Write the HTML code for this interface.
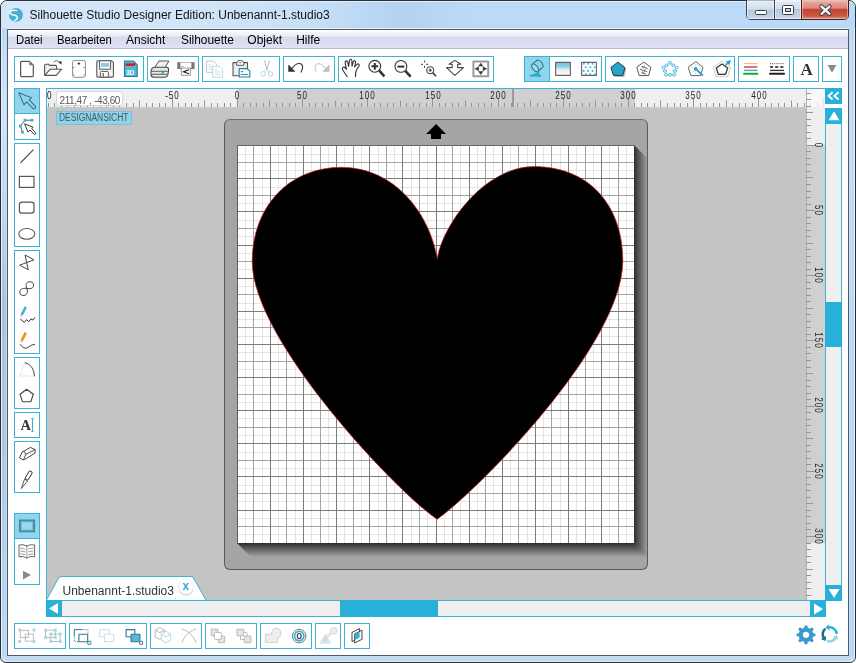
<!DOCTYPE html><html><head><meta charset="utf-8"><style>
*{margin:0;padding:0;box-sizing:border-box}
html,body{width:856px;height:663px;overflow:hidden;background:#fff;font-family:"Liberation Sans",sans-serif}
#r{position:absolute;left:0;top:0;width:856px;height:663px;overflow:hidden;will-change:transform}
.a{position:absolute}
.g{position:absolute;border:1px solid #3eb1d7;background:#fff}
svg{position:absolute;overflow:visible}
</style></head><body><div id="r"><div class="a" style="left:0;top:0;width:856px;height:663px;border:1px solid #26313c;border-radius:7px 7px 6px 6px;background:linear-gradient(#bcdcf8,#bcdaf6 30px,#c0dbf5 60px,#c3dcf4)"></div>
<div class="a" style="left:1px;top:1px;width:854px;height:661px;border:1px solid rgba(255,255,255,0.55);border-radius:6px 6px 5px 5px"></div>
<div class="a" style="left:1px;top:2px;width:854px;height:26px;border-radius:6px 6px 0 0;background:linear-gradient(90deg,#d6e7f9 0px,#d0e4f8 220px,#c4ddf6 330px,#b4d2f0 400px,#bcdaf7 470px,#bbdaf7 856px)"></div>
<div style="position:absolute;left:2px;top:40px;width:4px;height:616px;background:linear-gradient(#c4dcf4 0px,#d2e4f8 70px,#c0d6ec 180px,#aac4de 260px,#acc8e4 400px,#b8d6f4 560px,#bcd8f4 616px)"></div>
<div style="position:absolute;left:850px;top:40px;width:4px;height:616px;background:linear-gradient(#c4dcf4,#bcdaf8 300px,#b8d8f8 616px)"></div>
<div class="a" style="left:7px;top:29px;width:842px;height:627px;border:1px solid #4f5b66;background:#fff"></div>
<div style="position:absolute;left:7px;top:28px;width:842px;height:1px;background:rgba(255,255,255,0.6)"></div>
<div style="position:absolute;left:8px;top:30px;width:840px;height:18px;background:linear-gradient(#ffffff,#f3f4fa 3px,#e9ecf6 6px,#d5daee 7px,#dde2f3)"></div>
<div style="position:absolute;left:8px;top:48px;width:840px;height:1px;background:#b6bccb"></div>
<div class="a" style="left:29.5px;top:8.84px;font-size:12px;line-height:12px;color:#151515;white-space:nowrap;">Silhouette Studio Designer Edition: Unbenannt-1.studio3</div>
<div class="a" style="left:15.5px;top:33.84px;font-size:12px;line-height:12px;color:#000;white-space:nowrap;transform:scaleX(0.95);transform-origin:0 0">Datei</div>
<div class="a" style="left:57px;top:33.84px;font-size:12px;line-height:12px;color:#000;white-space:nowrap;transform:scaleX(0.943);transform-origin:0 0">Bearbeiten</div>
<div class="a" style="left:126px;top:33.84px;font-size:12px;line-height:12px;color:#000;white-space:nowrap;transform:scaleX(1);transform-origin:0 0">Ansicht</div>
<div class="a" style="left:180.6px;top:33.84px;font-size:12px;line-height:12px;color:#000;white-space:nowrap;transform:scaleX(0.99);transform-origin:0 0">Silhouette</div>
<div class="a" style="left:247.3px;top:33.84px;font-size:12px;line-height:12px;color:#000;white-space:nowrap;transform:scaleX(1);transform-origin:0 0">Objekt</div>
<div class="a" style="left:296.2px;top:33.84px;font-size:12px;line-height:12px;color:#000;white-space:nowrap;transform:scaleX(1);transform-origin:0 0">Hilfe</div>
<div class="g" style="left:14px;top:56px;width:130px;height:26px"></div>
<div class="g" style="left:147px;top:56px;width:52px;height:26px"></div>
<div class="g" style="left:202px;top:56px;width:78px;height:26px"></div>
<div class="g" style="left:283px;top:56px;width:52px;height:26px"></div>
<div class="g" style="left:338px;top:56px;width:156px;height:26px"></div>
<div class="g" style="left:524px;top:56px;width:78px;height:26px"></div>
<div class="g" style="left:605px;top:56px;width:130px;height:26px"></div>
<div class="g" style="left:738px;top:56px;width:52px;height:26px"></div>
<div class="g" style="left:793px;top:56px;width:26px;height:26px"></div>
<div class="g" style="left:822px;top:56px;width:20px;height:26px"></div>
<div style="position:absolute;left:525px;top:57px;width:24px;height:24px;background:#91d5ec"></div>
<div style="position:absolute;left:549px;top:57px;width:1px;height:24px;background:#3eb1d7"></div>
<div class="g" style="left:14px;top:88px;width:26px;height:52px"></div>
<div class="g" style="left:14px;top:143px;width:26px;height:104px"></div>
<div class="g" style="left:14px;top:250px;width:26px;height:104px"></div>
<div class="g" style="left:14px;top:357px;width:26px;height:52px"></div>
<div class="g" style="left:14px;top:412px;width:26px;height:26px"></div>
<div class="g" style="left:14px;top:441px;width:26px;height:52px"></div>
<div class="g" style="left:14px;top:513px;width:26px;height:72px"></div>
<div style="position:absolute;left:15px;top:89px;width:24px;height:24px;background:#91d5ec"></div>
<div style="position:absolute;left:15px;top:113px;width:24px;height:1px;background:#3eb1d7"></div>
<div style="position:absolute;left:15px;top:514px;width:24px;height:24px;background:#91d5ec"></div>
<div style="position:absolute;left:15px;top:538px;width:24px;height:1px;background:#3eb1d7"></div>
<div class="g" style="left:14px;top:623px;width:52px;height:26px"></div>
<div class="g" style="left:69px;top:623px;width:78px;height:26px"></div>
<div class="g" style="left:150px;top:623px;width:52px;height:26px"></div>
<div class="g" style="left:205px;top:623px;width:52px;height:26px"></div>
<div class="g" style="left:260px;top:623px;width:52px;height:26px"></div>
<div class="g" style="left:315px;top:623px;width:26px;height:26px"></div>
<div class="g" style="left:344px;top:623px;width:26px;height:26px"></div>
<div style="position:absolute;left:46px;top:88px;width:796px;height:1px;background:#3eb1d7"></div>
<div style="position:absolute;left:46px;top:88px;width:1px;height:529px;background:#3eb1d7"></div>
<div style="position:absolute;left:47px;top:108px;width:759px;height:492px;background:#c4c4c4"></div>
<div style="position:absolute;left:47px;top:89px;width:759px;height:19px;background:#efefef"></div>
<div style="position:absolute;left:237px;top:89px;width:398px;height:19px;background:#d0d0d0"></div>
<div style="position:absolute;left:47px;top:107px;width:759px;height:1px;background:#c8c8c8"></div>
<div style="position:absolute;left:806px;top:89px;width:19px;height:511px;background:#efefef"></div>
<div style="position:absolute;left:806px;top:145px;width:19px;height:398px;background:#d0d0d0"></div>
<div style="position:absolute;left:806px;top:89px;width:1px;height:511px;background:#b0b0b0"></div>
<div style="position:absolute;left:807px;top:89px;width:18px;height:18px;background:#f8f8f8"></div>
<svg class="a" style="left:0;top:0" width="856" height="663" viewBox="0 0 856 663"><line x1="48.5" y1="103" x2="48.5" y2="107" stroke="#969696" stroke-width="1"/><line x1="54.5" y1="103" x2="54.5" y2="107" stroke="#969696" stroke-width="1"/><line x1="61.5" y1="103" x2="61.5" y2="107" stroke="#969696" stroke-width="1"/><line x1="67.5" y1="103" x2="67.5" y2="107" stroke="#969696" stroke-width="1"/><line x1="74.5" y1="100.5" x2="74.5" y2="107" stroke="#969696" stroke-width="1"/><line x1="80.5" y1="103" x2="80.5" y2="107" stroke="#969696" stroke-width="1"/><line x1="87.5" y1="103" x2="87.5" y2="107" stroke="#969696" stroke-width="1"/><line x1="93.5" y1="103" x2="93.5" y2="107" stroke="#969696" stroke-width="1"/><line x1="100.5" y1="103" x2="100.5" y2="107" stroke="#969696" stroke-width="1"/><line x1="106.5" y1="98" x2="106.5" y2="107" stroke="#969696" stroke-width="1"/><line x1="113.5" y1="103" x2="113.5" y2="107" stroke="#969696" stroke-width="1"/><line x1="119.5" y1="103" x2="119.5" y2="107" stroke="#969696" stroke-width="1"/><line x1="126.5" y1="103" x2="126.5" y2="107" stroke="#969696" stroke-width="1"/><line x1="133.5" y1="103" x2="133.5" y2="107" stroke="#969696" stroke-width="1"/><line x1="139.5" y1="100.5" x2="139.5" y2="107" stroke="#969696" stroke-width="1"/><line x1="146.5" y1="103" x2="146.5" y2="107" stroke="#969696" stroke-width="1"/><line x1="152.5" y1="103" x2="152.5" y2="107" stroke="#969696" stroke-width="1"/><line x1="159.5" y1="103" x2="159.5" y2="107" stroke="#969696" stroke-width="1"/><line x1="165.5" y1="103" x2="165.5" y2="107" stroke="#969696" stroke-width="1"/><line x1="172.5" y1="98" x2="172.5" y2="107" stroke="#969696" stroke-width="1"/><line x1="178.5" y1="103" x2="178.5" y2="107" stroke="#969696" stroke-width="1"/><line x1="185.5" y1="103" x2="185.5" y2="107" stroke="#969696" stroke-width="1"/><line x1="191.5" y1="103" x2="191.5" y2="107" stroke="#969696" stroke-width="1"/><line x1="198.5" y1="103" x2="198.5" y2="107" stroke="#969696" stroke-width="1"/><line x1="204.5" y1="100.5" x2="204.5" y2="107" stroke="#969696" stroke-width="1"/><line x1="211.5" y1="103" x2="211.5" y2="107" stroke="#969696" stroke-width="1"/><line x1="217.5" y1="103" x2="217.5" y2="107" stroke="#969696" stroke-width="1"/><line x1="224.5" y1="103" x2="224.5" y2="107" stroke="#969696" stroke-width="1"/><line x1="230.5" y1="103" x2="230.5" y2="107" stroke="#969696" stroke-width="1"/><line x1="237.5" y1="98" x2="237.5" y2="107" stroke="#969696" stroke-width="1"/><line x1="243.5" y1="103" x2="243.5" y2="107" stroke="#969696" stroke-width="1"/><line x1="250.5" y1="103" x2="250.5" y2="107" stroke="#969696" stroke-width="1"/><line x1="256.5" y1="103" x2="256.5" y2="107" stroke="#969696" stroke-width="1"/><line x1="263.5" y1="103" x2="263.5" y2="107" stroke="#969696" stroke-width="1"/><line x1="269.5" y1="100.5" x2="269.5" y2="107" stroke="#969696" stroke-width="1"/><line x1="276.5" y1="103" x2="276.5" y2="107" stroke="#969696" stroke-width="1"/><line x1="282.5" y1="103" x2="282.5" y2="107" stroke="#969696" stroke-width="1"/><line x1="289.5" y1="103" x2="289.5" y2="107" stroke="#969696" stroke-width="1"/><line x1="295.5" y1="103" x2="295.5" y2="107" stroke="#969696" stroke-width="1"/><line x1="302.5" y1="98" x2="302.5" y2="107" stroke="#969696" stroke-width="1"/><line x1="309.5" y1="103" x2="309.5" y2="107" stroke="#969696" stroke-width="1"/><line x1="315.5" y1="103" x2="315.5" y2="107" stroke="#969696" stroke-width="1"/><line x1="322.5" y1="103" x2="322.5" y2="107" stroke="#969696" stroke-width="1"/><line x1="328.5" y1="103" x2="328.5" y2="107" stroke="#969696" stroke-width="1"/><line x1="335.5" y1="100.5" x2="335.5" y2="107" stroke="#969696" stroke-width="1"/><line x1="341.5" y1="103" x2="341.5" y2="107" stroke="#969696" stroke-width="1"/><line x1="348.5" y1="103" x2="348.5" y2="107" stroke="#969696" stroke-width="1"/><line x1="354.5" y1="103" x2="354.5" y2="107" stroke="#969696" stroke-width="1"/><line x1="361.5" y1="103" x2="361.5" y2="107" stroke="#969696" stroke-width="1"/><line x1="367.5" y1="98" x2="367.5" y2="107" stroke="#969696" stroke-width="1"/><line x1="374.5" y1="103" x2="374.5" y2="107" stroke="#969696" stroke-width="1"/><line x1="380.5" y1="103" x2="380.5" y2="107" stroke="#969696" stroke-width="1"/><line x1="387.5" y1="103" x2="387.5" y2="107" stroke="#969696" stroke-width="1"/><line x1="393.5" y1="103" x2="393.5" y2="107" stroke="#969696" stroke-width="1"/><line x1="400.5" y1="100.5" x2="400.5" y2="107" stroke="#969696" stroke-width="1"/><line x1="406.5" y1="103" x2="406.5" y2="107" stroke="#969696" stroke-width="1"/><line x1="413.5" y1="103" x2="413.5" y2="107" stroke="#969696" stroke-width="1"/><line x1="419.5" y1="103" x2="419.5" y2="107" stroke="#969696" stroke-width="1"/><line x1="426.5" y1="103" x2="426.5" y2="107" stroke="#969696" stroke-width="1"/><line x1="432.5" y1="98" x2="432.5" y2="107" stroke="#969696" stroke-width="1"/><line x1="439.5" y1="103" x2="439.5" y2="107" stroke="#969696" stroke-width="1"/><line x1="445.5" y1="103" x2="445.5" y2="107" stroke="#969696" stroke-width="1"/><line x1="452.5" y1="103" x2="452.5" y2="107" stroke="#969696" stroke-width="1"/><line x1="458.5" y1="103" x2="458.5" y2="107" stroke="#969696" stroke-width="1"/><line x1="465.5" y1="100.5" x2="465.5" y2="107" stroke="#969696" stroke-width="1"/><line x1="471.5" y1="103" x2="471.5" y2="107" stroke="#969696" stroke-width="1"/><line x1="478.5" y1="103" x2="478.5" y2="107" stroke="#969696" stroke-width="1"/><line x1="484.5" y1="103" x2="484.5" y2="107" stroke="#969696" stroke-width="1"/><line x1="491.5" y1="103" x2="491.5" y2="107" stroke="#969696" stroke-width="1"/><line x1="498.5" y1="98" x2="498.5" y2="107" stroke="#969696" stroke-width="1"/><line x1="504.5" y1="103" x2="504.5" y2="107" stroke="#969696" stroke-width="1"/><line x1="511.5" y1="103" x2="511.5" y2="107" stroke="#969696" stroke-width="1"/><line x1="517.5" y1="103" x2="517.5" y2="107" stroke="#969696" stroke-width="1"/><line x1="524.5" y1="103" x2="524.5" y2="107" stroke="#969696" stroke-width="1"/><line x1="530.5" y1="100.5" x2="530.5" y2="107" stroke="#969696" stroke-width="1"/><line x1="537.5" y1="103" x2="537.5" y2="107" stroke="#969696" stroke-width="1"/><line x1="543.5" y1="103" x2="543.5" y2="107" stroke="#969696" stroke-width="1"/><line x1="550.5" y1="103" x2="550.5" y2="107" stroke="#969696" stroke-width="1"/><line x1="556.5" y1="103" x2="556.5" y2="107" stroke="#969696" stroke-width="1"/><line x1="563.5" y1="98" x2="563.5" y2="107" stroke="#969696" stroke-width="1"/><line x1="569.5" y1="103" x2="569.5" y2="107" stroke="#969696" stroke-width="1"/><line x1="576.5" y1="103" x2="576.5" y2="107" stroke="#969696" stroke-width="1"/><line x1="582.5" y1="103" x2="582.5" y2="107" stroke="#969696" stroke-width="1"/><line x1="589.5" y1="103" x2="589.5" y2="107" stroke="#969696" stroke-width="1"/><line x1="595.5" y1="100.5" x2="595.5" y2="107" stroke="#969696" stroke-width="1"/><line x1="602.5" y1="103" x2="602.5" y2="107" stroke="#969696" stroke-width="1"/><line x1="608.5" y1="103" x2="608.5" y2="107" stroke="#969696" stroke-width="1"/><line x1="615.5" y1="103" x2="615.5" y2="107" stroke="#969696" stroke-width="1"/><line x1="621.5" y1="103" x2="621.5" y2="107" stroke="#969696" stroke-width="1"/><line x1="628.5" y1="98" x2="628.5" y2="107" stroke="#969696" stroke-width="1"/><line x1="634.5" y1="103" x2="634.5" y2="107" stroke="#969696" stroke-width="1"/><line x1="641.5" y1="103" x2="641.5" y2="107" stroke="#969696" stroke-width="1"/><line x1="647.5" y1="103" x2="647.5" y2="107" stroke="#969696" stroke-width="1"/><line x1="654.5" y1="103" x2="654.5" y2="107" stroke="#969696" stroke-width="1"/><line x1="660.5" y1="100.5" x2="660.5" y2="107" stroke="#969696" stroke-width="1"/><line x1="667.5" y1="103" x2="667.5" y2="107" stroke="#969696" stroke-width="1"/><line x1="674.5" y1="103" x2="674.5" y2="107" stroke="#969696" stroke-width="1"/><line x1="680.5" y1="103" x2="680.5" y2="107" stroke="#969696" stroke-width="1"/><line x1="687.5" y1="103" x2="687.5" y2="107" stroke="#969696" stroke-width="1"/><line x1="693.5" y1="98" x2="693.5" y2="107" stroke="#969696" stroke-width="1"/><line x1="700.5" y1="103" x2="700.5" y2="107" stroke="#969696" stroke-width="1"/><line x1="706.5" y1="103" x2="706.5" y2="107" stroke="#969696" stroke-width="1"/><line x1="713.5" y1="103" x2="713.5" y2="107" stroke="#969696" stroke-width="1"/><line x1="719.5" y1="103" x2="719.5" y2="107" stroke="#969696" stroke-width="1"/><line x1="726.5" y1="100.5" x2="726.5" y2="107" stroke="#969696" stroke-width="1"/><line x1="732.5" y1="103" x2="732.5" y2="107" stroke="#969696" stroke-width="1"/><line x1="739.5" y1="103" x2="739.5" y2="107" stroke="#969696" stroke-width="1"/><line x1="745.5" y1="103" x2="745.5" y2="107" stroke="#969696" stroke-width="1"/><line x1="752.5" y1="103" x2="752.5" y2="107" stroke="#969696" stroke-width="1"/><line x1="758.5" y1="98" x2="758.5" y2="107" stroke="#969696" stroke-width="1"/><line x1="765.5" y1="103" x2="765.5" y2="107" stroke="#969696" stroke-width="1"/><line x1="771.5" y1="103" x2="771.5" y2="107" stroke="#969696" stroke-width="1"/><line x1="778.5" y1="103" x2="778.5" y2="107" stroke="#969696" stroke-width="1"/><line x1="784.5" y1="103" x2="784.5" y2="107" stroke="#969696" stroke-width="1"/><line x1="791.5" y1="100.5" x2="791.5" y2="107" stroke="#969696" stroke-width="1"/><line x1="797.5" y1="103" x2="797.5" y2="107" stroke="#969696" stroke-width="1"/><line x1="804.5" y1="103" x2="804.5" y2="107" stroke="#969696" stroke-width="1"/><line x1="810.5" y1="102.5" x2="810.5" y2="107" stroke="#e2e2e2" stroke-width="1"/><line x1="817.5" y1="102.5" x2="817.5" y2="107" stroke="#e2e2e2" stroke-width="1"/><line x1="823.5" y1="98" x2="823.5" y2="107" stroke="#e2e2e2" stroke-width="1"/><line x1="806" y1="93.5" x2="811" y2="93.5" stroke="#969696" stroke-width="1"/><line x1="806" y1="99.5" x2="811" y2="99.5" stroke="#969696" stroke-width="1"/><line x1="806" y1="106.5" x2="811" y2="106.5" stroke="#969696" stroke-width="1"/><line x1="806" y1="112.5" x2="813" y2="112.5" stroke="#969696" stroke-width="1"/><line x1="806" y1="119.5" x2="811" y2="119.5" stroke="#969696" stroke-width="1"/><line x1="806" y1="125.5" x2="811" y2="125.5" stroke="#969696" stroke-width="1"/><line x1="806" y1="132.5" x2="811" y2="132.5" stroke="#969696" stroke-width="1"/><line x1="806" y1="138.5" x2="811" y2="138.5" stroke="#969696" stroke-width="1"/><line x1="806" y1="145.5" x2="815" y2="145.5" stroke="#969696" stroke-width="1"/><line x1="806" y1="151.5" x2="811" y2="151.5" stroke="#969696" stroke-width="1"/><line x1="806" y1="158.5" x2="811" y2="158.5" stroke="#969696" stroke-width="1"/><line x1="806" y1="164.5" x2="811" y2="164.5" stroke="#969696" stroke-width="1"/><line x1="806" y1="171.5" x2="811" y2="171.5" stroke="#969696" stroke-width="1"/><line x1="806" y1="177.5" x2="813" y2="177.5" stroke="#969696" stroke-width="1"/><line x1="806" y1="184.5" x2="811" y2="184.5" stroke="#969696" stroke-width="1"/><line x1="806" y1="191.5" x2="811" y2="191.5" stroke="#969696" stroke-width="1"/><line x1="806" y1="197.5" x2="811" y2="197.5" stroke="#969696" stroke-width="1"/><line x1="806" y1="204.5" x2="811" y2="204.5" stroke="#969696" stroke-width="1"/><line x1="806" y1="210.5" x2="815" y2="210.5" stroke="#969696" stroke-width="1"/><line x1="806" y1="217.5" x2="811" y2="217.5" stroke="#969696" stroke-width="1"/><line x1="806" y1="223.5" x2="811" y2="223.5" stroke="#969696" stroke-width="1"/><line x1="806" y1="230.5" x2="811" y2="230.5" stroke="#969696" stroke-width="1"/><line x1="806" y1="236.5" x2="811" y2="236.5" stroke="#969696" stroke-width="1"/><line x1="806" y1="243.5" x2="813" y2="243.5" stroke="#969696" stroke-width="1"/><line x1="806" y1="249.5" x2="811" y2="249.5" stroke="#969696" stroke-width="1"/><line x1="806" y1="256.5" x2="811" y2="256.5" stroke="#969696" stroke-width="1"/><line x1="806" y1="262.5" x2="811" y2="262.5" stroke="#969696" stroke-width="1"/><line x1="806" y1="269.5" x2="811" y2="269.5" stroke="#969696" stroke-width="1"/><line x1="806" y1="275.5" x2="815" y2="275.5" stroke="#969696" stroke-width="1"/><line x1="806" y1="282.5" x2="811" y2="282.5" stroke="#969696" stroke-width="1"/><line x1="806" y1="288.5" x2="811" y2="288.5" stroke="#969696" stroke-width="1"/><line x1="806" y1="295.5" x2="811" y2="295.5" stroke="#969696" stroke-width="1"/><line x1="806" y1="301.5" x2="811" y2="301.5" stroke="#969696" stroke-width="1"/><line x1="806" y1="308.5" x2="813" y2="308.5" stroke="#969696" stroke-width="1"/><line x1="806" y1="314.5" x2="811" y2="314.5" stroke="#969696" stroke-width="1"/><line x1="806" y1="321.5" x2="811" y2="321.5" stroke="#969696" stroke-width="1"/><line x1="806" y1="327.5" x2="811" y2="327.5" stroke="#969696" stroke-width="1"/><line x1="806" y1="334.5" x2="811" y2="334.5" stroke="#969696" stroke-width="1"/><line x1="806" y1="340.5" x2="815" y2="340.5" stroke="#969696" stroke-width="1"/><line x1="806" y1="347.5" x2="811" y2="347.5" stroke="#969696" stroke-width="1"/><line x1="806" y1="353.5" x2="811" y2="353.5" stroke="#969696" stroke-width="1"/><line x1="806" y1="360.5" x2="811" y2="360.5" stroke="#969696" stroke-width="1"/><line x1="806" y1="367.5" x2="811" y2="367.5" stroke="#969696" stroke-width="1"/><line x1="806" y1="373.5" x2="813" y2="373.5" stroke="#969696" stroke-width="1"/><line x1="806" y1="380.5" x2="811" y2="380.5" stroke="#969696" stroke-width="1"/><line x1="806" y1="386.5" x2="811" y2="386.5" stroke="#969696" stroke-width="1"/><line x1="806" y1="393.5" x2="811" y2="393.5" stroke="#969696" stroke-width="1"/><line x1="806" y1="399.5" x2="811" y2="399.5" stroke="#969696" stroke-width="1"/><line x1="806" y1="406.5" x2="815" y2="406.5" stroke="#969696" stroke-width="1"/><line x1="806" y1="412.5" x2="811" y2="412.5" stroke="#969696" stroke-width="1"/><line x1="806" y1="419.5" x2="811" y2="419.5" stroke="#969696" stroke-width="1"/><line x1="806" y1="425.5" x2="811" y2="425.5" stroke="#969696" stroke-width="1"/><line x1="806" y1="432.5" x2="811" y2="432.5" stroke="#969696" stroke-width="1"/><line x1="806" y1="438.5" x2="813" y2="438.5" stroke="#969696" stroke-width="1"/><line x1="806" y1="445.5" x2="811" y2="445.5" stroke="#969696" stroke-width="1"/><line x1="806" y1="451.5" x2="811" y2="451.5" stroke="#969696" stroke-width="1"/><line x1="806" y1="458.5" x2="811" y2="458.5" stroke="#969696" stroke-width="1"/><line x1="806" y1="464.5" x2="811" y2="464.5" stroke="#969696" stroke-width="1"/><line x1="806" y1="471.5" x2="815" y2="471.5" stroke="#969696" stroke-width="1"/><line x1="806" y1="477.5" x2="811" y2="477.5" stroke="#969696" stroke-width="1"/><line x1="806" y1="484.5" x2="811" y2="484.5" stroke="#969696" stroke-width="1"/><line x1="806" y1="490.5" x2="811" y2="490.5" stroke="#969696" stroke-width="1"/><line x1="806" y1="497.5" x2="811" y2="497.5" stroke="#969696" stroke-width="1"/><line x1="806" y1="503.5" x2="813" y2="503.5" stroke="#969696" stroke-width="1"/><line x1="806" y1="510.5" x2="811" y2="510.5" stroke="#969696" stroke-width="1"/><line x1="806" y1="516.5" x2="811" y2="516.5" stroke="#969696" stroke-width="1"/><line x1="806" y1="523.5" x2="811" y2="523.5" stroke="#969696" stroke-width="1"/><line x1="806" y1="529.5" x2="811" y2="529.5" stroke="#969696" stroke-width="1"/><line x1="806" y1="536.5" x2="815" y2="536.5" stroke="#969696" stroke-width="1"/><line x1="806" y1="543.5" x2="811" y2="543.5" stroke="#969696" stroke-width="1"/><line x1="806" y1="549.5" x2="811" y2="549.5" stroke="#969696" stroke-width="1"/><line x1="806" y1="556.5" x2="811" y2="556.5" stroke="#969696" stroke-width="1"/><line x1="806" y1="562.5" x2="811" y2="562.5" stroke="#969696" stroke-width="1"/><line x1="806" y1="569.5" x2="813" y2="569.5" stroke="#969696" stroke-width="1"/><line x1="806" y1="575.5" x2="811" y2="575.5" stroke="#969696" stroke-width="1"/><line x1="806" y1="582.5" x2="811" y2="582.5" stroke="#969696" stroke-width="1"/><line x1="806" y1="588.5" x2="811" y2="588.5" stroke="#969696" stroke-width="1"/><line x1="806" y1="595.5" x2="811" y2="595.5" stroke="#969696" stroke-width="1"/><rect x="512" y="89" width="2" height="18" fill="#9a9a9a"/></svg>
<div class="a" style="left:47px;top:89px;width:759px;height:18px;overflow:hidden"><div class="a" style="left:-25.45px;top:2.3px;width:40px;text-align:center;font-size:10px;line-height:10px;color:#222;letter-spacing:1.2px;padding-left:1.2px;transform:scaleX(0.8)">-150</div><div class="a" style="left:104.92px;top:2.3px;width:40px;text-align:center;font-size:10px;line-height:10px;color:#222;letter-spacing:1.2px;padding-left:1.2px;transform:scaleX(0.8)">-50</div><div class="a" style="left:170.10px;top:2.3px;width:40px;text-align:center;font-size:10px;line-height:10px;color:#222;letter-spacing:1.2px;padding-left:1.2px;transform:scaleX(0.8)">0</div><div class="a" style="left:235.28px;top:2.3px;width:40px;text-align:center;font-size:10px;line-height:10px;color:#222;letter-spacing:1.2px;padding-left:1.2px;transform:scaleX(0.8)">50</div><div class="a" style="left:300.47px;top:2.3px;width:40px;text-align:center;font-size:10px;line-height:10px;color:#222;letter-spacing:1.2px;padding-left:1.2px;transform:scaleX(0.8)">100</div><div class="a" style="left:365.65px;top:2.3px;width:40px;text-align:center;font-size:10px;line-height:10px;color:#222;letter-spacing:1.2px;padding-left:1.2px;transform:scaleX(0.8)">150</div><div class="a" style="left:430.83px;top:2.3px;width:40px;text-align:center;font-size:10px;line-height:10px;color:#222;letter-spacing:1.2px;padding-left:1.2px;transform:scaleX(0.8)">200</div><div class="a" style="left:496.02px;top:2.3px;width:40px;text-align:center;font-size:10px;line-height:10px;color:#222;letter-spacing:1.2px;padding-left:1.2px;transform:scaleX(0.8)">250</div><div class="a" style="left:561.20px;top:2.3px;width:40px;text-align:center;font-size:10px;line-height:10px;color:#222;letter-spacing:1.2px;padding-left:1.2px;transform:scaleX(0.8)">300</div><div class="a" style="left:626.38px;top:2.3px;width:40px;text-align:center;font-size:10px;line-height:10px;color:#222;letter-spacing:1.2px;padding-left:1.2px;transform:scaleX(0.8)">350</div><div class="a" style="left:691.57px;top:2.3px;width:40px;text-align:center;font-size:10px;line-height:10px;color:#222;letter-spacing:1.2px;padding-left:1.2px;transform:scaleX(0.8)">400</div></div>
<div class="a" style="left:798px;top:139.60px;width:40px;height:10px;text-align:center;font-size:10px;line-height:10px;color:#222;letter-spacing:1.2px;padding-left:1.2px;transform:rotate(90deg) scaleX(0.8)">0</div>
<div class="a" style="left:798px;top:204.78px;width:40px;height:10px;text-align:center;font-size:10px;line-height:10px;color:#222;letter-spacing:1.2px;padding-left:1.2px;transform:rotate(90deg) scaleX(0.8)">50</div>
<div class="a" style="left:798px;top:269.97px;width:40px;height:10px;text-align:center;font-size:10px;line-height:10px;color:#222;letter-spacing:1.2px;padding-left:1.2px;transform:rotate(90deg) scaleX(0.8)">100</div>
<div class="a" style="left:798px;top:335.15px;width:40px;height:10px;text-align:center;font-size:10px;line-height:10px;color:#222;letter-spacing:1.2px;padding-left:1.2px;transform:rotate(90deg) scaleX(0.8)">150</div>
<div class="a" style="left:798px;top:400.33px;width:40px;height:10px;text-align:center;font-size:10px;line-height:10px;color:#222;letter-spacing:1.2px;padding-left:1.2px;transform:rotate(90deg) scaleX(0.8)">200</div>
<div class="a" style="left:798px;top:465.52px;width:40px;height:10px;text-align:center;font-size:10px;line-height:10px;color:#222;letter-spacing:1.2px;padding-left:1.2px;transform:rotate(90deg) scaleX(0.8)">250</div>
<div class="a" style="left:798px;top:530.70px;width:40px;height:10px;text-align:center;font-size:10px;line-height:10px;color:#222;letter-spacing:1.2px;padding-left:1.2px;transform:rotate(90deg) scaleX(0.8)">300</div>
<div class="a" style="left:56px;top:91px;width:67px;height:15px;border:1px solid #d8d8d8;border-radius:3px;background:#fff"></div>
<div class="a" style="left:59.5px;top:95.5px;font-size:10px;line-height:10px;color:#5a5a5a;white-space:nowrap;letter-spacing:-0.4px">211,47 , -43,60</div>
<div class="a" style="left:56px;top:111px;width:76px;height:14px;border:1px solid #7cc1d8;background:#8fd3ea"></div>
<div class="a" style="left:59px;top:113px;font-size:10px;line-height:10px;color:#44585f;white-space:nowrap;transform:scaleX(0.845);transform-origin:0 0">DESIGNANSICHT</div>
<div class="a" style="left:224px;top:119px;width:424px;height:451px;border:1px solid #5a5a5a;border-top-color:#6e6e6e;border-radius:6px;background:#a5a5a5"></div>
<svg class="a" style="left:0;top:0" width="856" height="663">
<defs>
<linearGradient id="gr" x1="0" x2="1" y1="0" y2="0"><stop offset="0" stop-color="#2e2e2e"/><stop offset="1" stop-color="#9c9c9c"/></linearGradient>
<linearGradient id="gb" x1="0" x2="0" y1="0" y2="1"><stop offset="0" stop-color="#2e2e2e"/><stop offset="1" stop-color="#a5a5a5"/></linearGradient>
</defs>
<polygon points="634,145 647,158 647,557 634,543" fill="url(#gr)"/>
<polygon points="237,543 634,543 647,557 251,557" fill="url(#gb)"/>
</svg>
<svg class="a" style="left:0;top:0" width="856" height="663"><polygon points="436.1,124 446,134 441,134 441,139 431,139 431,134 426.1,134" fill="#000"/></svg>
<svg class="a" style="left:0;top:0" width="856" height="663"><rect x="237" y="145" width="397" height="398" fill="#fff"/><rect x="245" y="145" width="1" height="398" fill="#e4e4e4"/><rect x="237" y="154" width="397" height="1" fill="#e4e4e4"/><rect x="262" y="145" width="1" height="398" fill="#e4e4e4"/><rect x="237" y="170" width="397" height="1" fill="#e4e4e4"/><rect x="278" y="145" width="1" height="398" fill="#e4e4e4"/><rect x="237" y="187" width="397" height="1" fill="#e4e4e4"/><rect x="295" y="145" width="1" height="398" fill="#e4e4e4"/><rect x="237" y="203" width="397" height="1" fill="#e4e4e4"/><rect x="311" y="145" width="1" height="398" fill="#e4e4e4"/><rect x="237" y="220" width="397" height="1" fill="#e4e4e4"/><rect x="328" y="145" width="1" height="398" fill="#e4e4e4"/><rect x="237" y="236" width="397" height="1" fill="#e4e4e4"/><rect x="344" y="145" width="1" height="398" fill="#e4e4e4"/><rect x="237" y="253" width="397" height="1" fill="#e4e4e4"/><rect x="361" y="145" width="1" height="398" fill="#e4e4e4"/><rect x="237" y="269" width="397" height="1" fill="#e4e4e4"/><rect x="378" y="145" width="1" height="398" fill="#e4e4e4"/><rect x="237" y="286" width="397" height="1" fill="#e4e4e4"/><rect x="394" y="145" width="1" height="398" fill="#e4e4e4"/><rect x="237" y="303" width="397" height="1" fill="#e4e4e4"/><rect x="411" y="145" width="1" height="398" fill="#e4e4e4"/><rect x="237" y="319" width="397" height="1" fill="#e4e4e4"/><rect x="427" y="145" width="1" height="398" fill="#e4e4e4"/><rect x="237" y="336" width="397" height="1" fill="#e4e4e4"/><rect x="444" y="145" width="1" height="398" fill="#e4e4e4"/><rect x="237" y="352" width="397" height="1" fill="#e4e4e4"/><rect x="460" y="145" width="1" height="398" fill="#e4e4e4"/><rect x="237" y="369" width="397" height="1" fill="#e4e4e4"/><rect x="477" y="145" width="1" height="398" fill="#e4e4e4"/><rect x="237" y="385" width="397" height="1" fill="#e4e4e4"/><rect x="493" y="145" width="1" height="398" fill="#e4e4e4"/><rect x="237" y="402" width="397" height="1" fill="#e4e4e4"/><rect x="510" y="145" width="1" height="398" fill="#e4e4e4"/><rect x="237" y="418" width="397" height="1" fill="#e4e4e4"/><rect x="527" y="145" width="1" height="398" fill="#e4e4e4"/><rect x="237" y="435" width="397" height="1" fill="#e4e4e4"/><rect x="543" y="145" width="1" height="398" fill="#e4e4e4"/><rect x="237" y="452" width="397" height="1" fill="#e4e4e4"/><rect x="560" y="145" width="1" height="398" fill="#e4e4e4"/><rect x="237" y="468" width="397" height="1" fill="#e4e4e4"/><rect x="576" y="145" width="1" height="398" fill="#e4e4e4"/><rect x="237" y="485" width="397" height="1" fill="#e4e4e4"/><rect x="593" y="145" width="1" height="398" fill="#e4e4e4"/><rect x="237" y="501" width="397" height="1" fill="#e4e4e4"/><rect x="609" y="145" width="1" height="398" fill="#e4e4e4"/><rect x="237" y="518" width="397" height="1" fill="#e4e4e4"/><rect x="626" y="145" width="1" height="398" fill="#e4e4e4"/><rect x="237" y="534" width="397" height="1" fill="#e4e4e4"/><rect x="253" y="145" width="1" height="398" fill="#a4a4a4"/><rect x="237" y="162" width="397" height="1" fill="#a4a4a4"/><rect x="286" y="145" width="1" height="398" fill="#a4a4a4"/><rect x="237" y="195" width="397" height="1" fill="#a4a4a4"/><rect x="320" y="145" width="1" height="398" fill="#a4a4a4"/><rect x="237" y="228" width="397" height="1" fill="#a4a4a4"/><rect x="353" y="145" width="1" height="398" fill="#a4a4a4"/><rect x="237" y="261" width="397" height="1" fill="#a4a4a4"/><rect x="386" y="145" width="1" height="398" fill="#a4a4a4"/><rect x="237" y="294" width="397" height="1" fill="#a4a4a4"/><rect x="419" y="145" width="1" height="398" fill="#a4a4a4"/><rect x="237" y="327" width="397" height="1" fill="#a4a4a4"/><rect x="452" y="145" width="1" height="398" fill="#a4a4a4"/><rect x="237" y="361" width="397" height="1" fill="#a4a4a4"/><rect x="485" y="145" width="1" height="398" fill="#a4a4a4"/><rect x="237" y="394" width="397" height="1" fill="#a4a4a4"/><rect x="518" y="145" width="1" height="398" fill="#a4a4a4"/><rect x="237" y="427" width="397" height="1" fill="#a4a4a4"/><rect x="551" y="145" width="1" height="398" fill="#a4a4a4"/><rect x="237" y="460" width="397" height="1" fill="#a4a4a4"/><rect x="585" y="145" width="1" height="398" fill="#a4a4a4"/><rect x="237" y="493" width="397" height="1" fill="#a4a4a4"/><rect x="618" y="145" width="1" height="398" fill="#a4a4a4"/><rect x="237" y="526" width="397" height="1" fill="#a4a4a4"/><rect x="237" y="145" width="1" height="398" fill="#7c7c7c"/><rect x="237" y="145" width="397" height="1" fill="#7c7c7c"/><rect x="270" y="145" width="1" height="398" fill="#7c7c7c"/><rect x="237" y="178" width="397" height="1" fill="#7c7c7c"/><rect x="303" y="145" width="1" height="398" fill="#7c7c7c"/><rect x="237" y="211" width="397" height="1" fill="#7c7c7c"/><rect x="336" y="145" width="1" height="398" fill="#7c7c7c"/><rect x="237" y="245" width="397" height="1" fill="#7c7c7c"/><rect x="369" y="145" width="1" height="398" fill="#7c7c7c"/><rect x="237" y="278" width="397" height="1" fill="#7c7c7c"/><rect x="402" y="145" width="1" height="398" fill="#7c7c7c"/><rect x="237" y="311" width="397" height="1" fill="#7c7c7c"/><rect x="436" y="145" width="1" height="398" fill="#7c7c7c"/><rect x="237" y="344" width="397" height="1" fill="#7c7c7c"/><rect x="469" y="145" width="1" height="398" fill="#7c7c7c"/><rect x="237" y="377" width="397" height="1" fill="#7c7c7c"/><rect x="502" y="145" width="1" height="398" fill="#7c7c7c"/><rect x="237" y="410" width="397" height="1" fill="#7c7c7c"/><rect x="535" y="145" width="1" height="398" fill="#7c7c7c"/><rect x="237" y="443" width="397" height="1" fill="#7c7c7c"/><rect x="568" y="145" width="1" height="398" fill="#7c7c7c"/><rect x="237" y="476" width="397" height="1" fill="#7c7c7c"/><rect x="601" y="145" width="1" height="398" fill="#7c7c7c"/><rect x="237" y="510" width="397" height="1" fill="#7c7c7c"/><rect x="237" y="145" width="1" height="398" fill="#5e5e5e"/><rect x="237" y="145" width="397" height="1" fill="#666"/></svg>
<svg class="a" style="left:0;top:0" width="856" height="663"><path d="M437.30,258.50 C429.63,214.03 395.29,167.32 341.12,167.32 C288.76,167.32 252.19,207.01 252.19,261.45 C252.19,342.38 403.59,498.16 437.20,519.20 C474.74,492.72 622.84,346.04 622.84,260.53 C622.84,206.56 590.22,166.60 534.09,166.60 C484.79,166.60 443.16,223.85 437.20,258.50 Z" fill="#000" stroke="#d42020" stroke-width="0.7"/></svg>
<div style="position:absolute;left:825px;top:88px;width:17px;height:16px;background:#27b1d9"></div>
<svg class="a" style="left:825px;top:88px" width="17" height="16"><path d="M7.6,4.3 L3.6,7.9 L7.6,11.5 M13.6,4.3 L9.4,7.9 L13.6,11.5" stroke="#fff" stroke-width="1.9" fill="none"/></svg>
<div style="position:absolute;left:825px;top:108px;width:17px;height:492px;background:#efefef;border-left:1px solid #3eb1d7;border-right:1px solid #3eb1d7"></div>
<div style="position:absolute;left:825px;top:108px;width:17px;height:16px;background:#27b1d9"></div>
<svg class="a" style="left:825px;top:108px" width="17" height="16"><polygon points="9,3.2 14.4,12.2 3.6,12.2" fill="#fff"/></svg>
<div style="position:absolute;left:825px;top:302px;width:17px;height:45px;background:#27b1d9"></div>
<div style="position:absolute;left:825px;top:585px;width:17px;height:16px;background:#27b1d9"></div>
<svg class="a" style="left:825px;top:585px" width="17" height="16"><polygon points="3.6,4 14.6,4 9.1,13" fill="#fff"/></svg>
<div style="position:absolute;left:46px;top:600px;width:780px;height:17px;background:#efefef;border-top:1px solid #3eb1d7;border-bottom:1px solid #3eb1d7"></div>
<div style="position:absolute;left:46px;top:600px;width:16px;height:17px;background:#27b1d9"></div>
<svg class="a" style="left:46px;top:600px" width="16" height="17"><polygon points="3,8.5 12,3 12,14" fill="#fff"/></svg>
<div style="position:absolute;left:340px;top:600px;width:98px;height:17px;background:#27b1d9"></div>
<div style="position:absolute;left:810px;top:600px;width:16px;height:17px;background:#27b1d9"></div>
<svg class="a" style="left:810px;top:600px" width="16" height="17"><polygon points="4,3.6 13,9 4,14.6" fill="#fff"/></svg>
<svg class="a" style="left:0;top:0" width="856" height="663"><path d="M46.5,600 L58,579 Q59.5,576.5 62,576.5 L191,576.5 Q193,576.5 194,579 L206,600" fill="#fff" stroke="#3eb1d7" stroke-width="1"/></svg>
<div class="a" style="left:62.5px;top:585px;font-size:12px;line-height:12px;color:#333;white-space:nowrap">Unbenannt-1.studio3</div>
<div class="a" style="left:179px;top:580px;width:14px;height:14px;border-radius:7px;background:#fff;box-shadow:0 1px 2px rgba(0,0,0,0.25)"></div>
<div class="a" style="left:182.4px;top:580px;width:8px;font-size:12px;line-height:12px;font-weight:bold;color:#27aad8">x</div>
<svg class="a" style="left:0;top:0" width="856" height="663">
<circle cx="15.9" cy="14.9" r="7" fill="#48aed2"/>
<path d="M17.2,10.6 C13.5,9.6 10.2,10.6 9.9,12.6 C9.7,14.4 12.5,14.8 14.5,15.3 C17,15.9 17.8,16.8 17.3,18.3 C16.9,19.6 15.6,20.4 14.2,20.7" stroke="#fff" stroke-width="1.5" fill="none"/>
<defs>
<linearGradient id="cb" x1="0" x2="0" y1="0" y2="1"><stop offset="0" stop-color="#e6eef8"/><stop offset="0.48" stop-color="#d2deec"/><stop offset="0.5" stop-color="#b5c7dc"/><stop offset="1" stop-color="#c9d8ea"/></linearGradient>
<linearGradient id="cr" x1="0" x2="0" y1="0" y2="1"><stop offset="0" stop-color="#eab0a6"/><stop offset="0.45" stop-color="#d98a7c"/><stop offset="0.5" stop-color="#c8432c"/><stop offset="0.8" stop-color="#c65640"/><stop offset="1" stop-color="#dc9482"/></linearGradient>
</defs>
<path d="M746.5,0 L746.5,15.5 Q746.5,19.5 750.5,19.5 L774.5,19.5 L774.5,0 Z" fill="url(#cb)" stroke="#3a4250" stroke-width="1"/>
<rect x="774.5" y="-1" width="27" height="20.5" fill="url(#cb)" stroke="#3a4250" stroke-width="1"/>
<path d="M801.5,-1 L801.5,19.5 L844.5,19.5 Q848.5,19.5 848.5,15.5 L848.5,-1 Z" fill="url(#cr)" stroke="#4a1a14" stroke-width="1"/>
<rect x="747.5" y="1" width="26" height="17.5" fill="none" stroke="rgba(255,255,255,0.55)" stroke-width="1"/>
<rect x="775.5" y="1" width="25" height="17.5" fill="none" stroke="rgba(255,255,255,0.55)" stroke-width="1"/>
<rect x="802.5" y="1" width="45" height="17.5" fill="none" stroke="rgba(255,255,255,0.4)" stroke-width="1"/>
<rect x="755.5" y="10.5" width="11" height="4" rx="1" fill="#fff" stroke="#333b48" stroke-width="1"/>
<rect x="782.5" y="5.5" width="11" height="9" rx="1" fill="#fff" stroke="#333b48" stroke-width="1"/>
<rect x="785.5" y="8.5" width="5" height="3" fill="#c4d4e6" stroke="#333b48" stroke-width="1"/>
<path d="M821.5,6.5 L829.5,13.8 M829.5,6.5 L821.5,13.8" stroke="#2d3540" stroke-width="4.2" stroke-linecap="round"/>
<path d="M821.5,6.5 L829.5,13.8 M829.5,6.5 L821.5,13.8" stroke="#f4f4f4" stroke-width="2.4" stroke-linecap="round"/>
</svg>
<svg class="a" style="left:0;top:0" width="856" height="663" fill="none" stroke-linejoin="round">
<!-- new doc -->
<path d="M20.6,62.3 Q20.6,61.3 21.6,61.3 L29.4,61.3 L33.3,65.2 L33.3,75.6 Q33.3,76.6 32.3,76.6 L21.6,76.6 Q20.6,76.6 20.6,75.6 Z" stroke="#555" stroke-width="1.2" fill="#fff"/>
<circle cx="30.6" cy="64" r="1.1" stroke="#555" stroke-width="1"/>
<!-- open folder -->
<path d="M44.6,75.2 L44.6,65.3 Q44.6,64.2 45.7,64.2 L48.4,64.2 L49.6,65.4 L55.6,65.4 Q56.6,65.4 56.6,66.4 L56.6,69.2" stroke="#555" stroke-width="1.1" fill="#efefef"/>
<path d="M44.8,75.4 L50.3,69.2 L61.6,69.2 L56.2,75.4 Z" stroke="#555" stroke-width="1.1" fill="#fff"/>
<path d="M53.5,62.3 Q56.5,58.8 59.8,62.6" stroke="#555" stroke-width="0.9"/>
<path d="M58.3,62.6 L61.6,64.4 L61.4,60.8 Z" fill="#333" stroke="none"/>
<!-- mat -->
<rect x="72.6" y="60.4" width="12.8" height="16.9" rx="2" stroke="#8a8a8a" stroke-width="1"/>
<path d="M78.9,62.2 L80.3,63.6 L78.9,65 L77.5,63.6 Z" fill="#333" stroke="none"/>
<path d="M73,67.5 L74.6,67.5 M83.4,67.5 L85,67.5 M73,75 L74.6,75 M83.4,75 L85,75" stroke="#999" stroke-width="1"/>
<!-- floppy -->
<path d="M96.8,61.7 Q96.8,60.7 97.8,60.7 L111.5,60.7 L113.4,62.6 L113.4,76.2 Q113.4,77.1 112.4,77.1 L97.8,77.1 Q96.8,77.1 96.8,76.1 Z" stroke="#555" stroke-width="1.1" fill="#f4f4f4"/>
<rect x="99.6" y="60.8" width="11" height="8.4" stroke="#555" stroke-width="1" fill="#fff"/>
<rect x="101" y="63" width="8.2" height="3.8" fill="#8fcbe0" stroke="none"/>
<rect x="100.4" y="71.4" width="8" height="5.7" rx="1" stroke="#555" stroke-width="1" fill="#fff"/>
<path d="M103.2,73 L103.2,76.6" stroke="#555" stroke-width="1.2"/>
<!-- sd card -->
<path d="M124.5,61 L133.4,61 L137.2,64.8 L137.2,76.5 L124.5,76.5 Z" fill="#58b6d4" stroke="#1f7e9c" stroke-width="1.1"/>
<rect x="125.6" y="63.4" width="9.6" height="2.4" fill="#e01010" stroke="none"/>
<text x="126.2" y="75" font-family="Liberation Sans" font-weight="bold" font-size="6.5" fill="#fff" stroke="none">3D</text>
<!-- printer -->
<path d="M155,67 L158.8,61 L169,61 L165.4,67" stroke="#555" stroke-width="1" fill="#f0f0f0"/>
<path d="M151,72 Q151,67.3 155.5,67.3 L166.5,67.3 Q169,67.5 168.6,70 L167.8,75 Q167.3,77.2 165,77.2 L154,77.2 Q151,77.2 151,74.5 Z" stroke="#444" stroke-width="1.1" fill="#e6e6e6"/>
<path d="M151.5,71.3 L167.7,71.3 M151.8,74.3 L167.2,74.3" stroke="#555" stroke-width="0.9"/>
<rect x="161.6" y="72" width="2.4" height="1.9" fill="#3ab0e0" stroke="none"/>
<!-- cutter -->
<rect x="177.3" y="62.2" width="17.3" height="6.8" fill="#777" stroke="none"/>
<rect x="180.4" y="62.6" width="11" height="5.4" fill="#fff" stroke="none"/>
<path d="M180.5,66.6 L184,66.6" stroke="#7cc6e4" stroke-width="0.8"/>
<rect x="181.3" y="68" width="9" height="7.3" fill="#fff" stroke="#888" stroke-width="0.9"/>
<path d="M189,69.8 L183.2,71.8 L189,73.8 M185.4,71.1 L185.4,72.5" stroke="#222" stroke-width="1.2"/>
<!-- copy -->
<path d="M206.6,61 L213.5,61 L216.6,64.2 L216.6,72.3 L206.6,72.3 Z" stroke="#c8c8c8" stroke-width="1" fill="#fff"/>
<path d="M208.5,64.5 L211,64.5 M208.5,66.8 L214.5,66.8 M208.5,69.2 L214.5,69.2" stroke="#d0d0d0" stroke-width="0.8"/>
<path d="M212.4,66.2 L219.7,66.2 L222.6,69.2 L222.6,77.2 L212.4,77.2 Z" stroke="#b9dfe9" stroke-width="1" fill="#fff"/>
<path d="M214.4,69.5 L216.8,69.5 M214.4,72 L220.8,72 M214.4,74.5 L220.8,74.5" stroke="#c8d8de" stroke-width="0.8"/>
<!-- paste -->
<path d="M233,62.6 L247.5,62.6 L247.5,75.8 L233,75.8 Z" stroke="#555" stroke-width="1.1" fill="#eeeeee" stroke-linejoin="round"/>
<path d="M236.6,65.3 L236.6,63.5 Q236.6,60.3 240.2,60.3 Q243.8,60.3 243.8,63.5 L243.8,65.3 Z" stroke="#555" stroke-width="1" fill="#fff"/>
<rect x="239.3" y="62" width="1.8" height="1.2" fill="#777" stroke="none"/>
<path d="M239.2,68.6 L247.2,68.6 L249.8,71.2 L249.8,77 L239.2,77 Z" stroke="#20809c" stroke-width="1.1" fill="#fff"/>
<path d="M240.8,71.6 L243.2,71.6 M240.8,74.5 L248.2,74.5" stroke="#2a90b0" stroke-width="1.1"/>
<!-- scissors -->
<path d="M264.4,60.3 L266.8,69.6 L269.5,60.3" stroke="#b0b0b0" stroke-width="0.9"/>
<path d="M266.8,69.6 L264.2,72.2 M266.8,69.6 L269.4,72.2" stroke="#a8d4e2" stroke-width="0.9"/>
<circle cx="263.2" cy="73.9" r="2.3" stroke="#a8d4e2" stroke-width="0.9"/>
<circle cx="270.4" cy="73.9" r="2.3" stroke="#a8d4e2" stroke-width="0.9"/>
<!-- undo -->
<path d="M291.5,69 Q297,61.5 301.5,64.2 Q304,67 300.8,72.6" stroke="#333" stroke-width="1.1"/>
<path d="M288.6,65 L288.6,71.4 L294.8,71.4 Z" fill="#333" stroke="#333" stroke-width="0.6"/>
<!-- redo -->
<path d="M325.8,69 Q320.5,61.5 316.2,64.4 Q313.6,67 316.6,72.4" stroke="#c0c0c0" stroke-width="1"/>
<path d="M329.1,65 L329.1,71.4 L322.9,71.4 Z" fill="#bdbdbd" stroke="#bdbdbd" stroke-width="0.6"/>
<!-- hand -->
<path d="M347.4,77 L342.6,69.8 Q341.8,68 343.2,67.3 Q344.5,66.8 345.6,68.3 L346.4,69.3 L345.2,62.6 Q345,61 346.3,60.9 Q347.5,60.9 347.8,62.4 L348.6,66.4 L349.4,60.8 Q349.6,59.3 350.7,59.3 Q351.9,59.3 351.9,60.8 L352,66.3 L353.3,61.8 Q353.7,60.5 354.8,60.7 Q355.9,61 355.6,62.4 L354.6,67 L357,64.4 Q358,63.4 358.9,64.1 Q359.7,64.8 359,66 L356.3,70.3 Q355.3,72.5 355.5,77" stroke="#333" stroke-width="1.1" fill="#fff"/>
<!-- zoom in -->
<circle cx="374.8" cy="66.3" r="5.9" stroke="#333" stroke-width="1.1" fill="#fff"/>
<path d="M371.4,66.3 L378.2,66.3 M374.8,62.9 L374.8,69.7" stroke="#333" stroke-width="2"/>
<path d="M379.2,70.7 L384.4,76.4" stroke="#333" stroke-width="2.6"/>
<!-- zoom out -->
<circle cx="400.9" cy="66.4" r="5.9" stroke="#333" stroke-width="1.1" fill="#fff"/>
<path d="M397.4,66.6 L404.4,66.6" stroke="#333" stroke-width="2"/>
<path d="M405.3,70.8 L410.6,76.6" stroke="#333" stroke-width="2.6"/>
<!-- zoom selection -->
<path d="M421,64.3 L423,64.3 M426.2,64.3 L428.2,64.3 M424.6,60.5 L424.6,62.4 M424.6,65.9 L424.6,67.9" stroke="#333" stroke-width="1"/>
<circle cx="430.2" cy="70.2" r="3.6" stroke="#333" stroke-width="1"/>
<path d="M428.6,70.2 L431.8,70.2 M430.2,68.6 L430.2,71.8" stroke="#333" stroke-width="1.1"/>
<path d="M432.8,72.8 L436,76.3" stroke="#333" stroke-width="1.5"/>
<!-- fit -->
<path d="M446.4,67.6 L452.2,67.6 L452.2,64.3 L449,64.3 L454.9,60.4 L460.8,64.3 L457.6,64.3 L457.6,67.6 L463.5,67.6 L454.9,75.4 Z" stroke="#444" stroke-width="1.05" fill="#fff"/>
<!-- fit page -->
<rect x="473.4" y="61.4" width="14.8" height="14.8" stroke="#9a9a9a" stroke-width="2" fill="#fff"/>
<path d="M480.8,63.2 L482.9,66 L478.7,66 Z M480.8,74.5 L482.9,71.6 L478.7,71.6 Z M475.1,68.8 L478.6,66.8 L478.6,70.8 Z M486.6,68.8 L483.1,66.8 L483.1,70.8 Z" fill="#3a3a3a" stroke="#3a3a3a" stroke-width="0.6"/>
</svg>
<svg class="a" style="left:0;top:0" width="856" height="663" fill="none" stroke-linejoin="round">
<defs>
<linearGradient id="gf" x1="0" x2="0" y1="0" y2="1"><stop offset="0" stop-color="#5cc6e6"/><stop offset="0.35" stop-color="#8fd0e4"/><stop offset="0.5" stop-color="#e6e6e6"/><stop offset="1" stop-color="#ffffff"/></linearGradient>
</defs>
<!-- fill bucket -->
<g transform="rotate(50 537.7 65.6)">
<path d="M533.2,62.2 Q537.7,58.6 542.2,62.2 L542.2,69 L533.2,69 Z" stroke="#2e7a93" stroke-width="1.1" fill="#8fd3ea"/>
<ellipse cx="537.7" cy="69" rx="4.5" ry="2.4" stroke="#2e7a93" stroke-width="1.1" fill="#a6dcee"/>
</g>
<path d="M539.2,71 Q538.4,73.6 541.6,75.8 Q542,77.2 537.5,76.8 L530.8,76.5 Q528.6,76.2 530.2,75.1 Q534,74.3 537,72.6 Z" fill="#2fa9d3" stroke="none"/>
<!-- gradient fill -->
<rect x="555.6" y="62.4" width="14.8" height="13" stroke="#666" stroke-width="1.1" fill="url(#gf)"/>
<!-- pattern fill -->
<rect x="581.6" y="62.4" width="14.8" height="13" stroke="#666" stroke-width="1.1" fill="#fff"/>
<g fill="#45b8e0" stroke="none">
<circle cx="583.8" cy="63.8" r="1"/><circle cx="588.2" cy="63.8" r="1"/><circle cx="592.6" cy="63.8" r="1"/>
<circle cx="585.8" cy="67.2" r="1.05"/><circle cx="590.3" cy="67.2" r="1.05"/><circle cx="594.8" cy="67.2" r="1.05"/>
<circle cx="583.6" cy="70.9" r="1.05"/><circle cx="588.1" cy="70.9" r="1.05"/><circle cx="592.6" cy="70.9" r="1.05"/>
<circle cx="585.8" cy="74.3" r="1"/><circle cx="590.3" cy="74.3" r="1"/><circle cx="594.8" cy="74.3" r="1"/>
</g>
<!-- filled pentagon -->
<polygon points="619.4,63.6 626.4,69 624.3,76.9 614.9,76.9 612.4,69" fill="#9a9a9a" stroke="none" opacity="0.7"/>
<polygon points="617.9,62.1 624.9,67.5 622.8,75.4 613.4,75.4 610.9,67.5" fill="#2aa3cc" stroke="#2b3a40" stroke-width="1"/>
<!-- hatched pentagon -->
<polygon points="643.7,62.1 650.8,67.2 648.7,75.6 639.2,75.6 636.8,67.2" fill="#fff" stroke="#555" stroke-width="1"/>
<path d="M641.5,66.4 L647.6,68.5 M640,69.2 L647.2,71.6 M641.2,72.6 L646.2,74.3" stroke="#6a6a6a" stroke-width="1"/>
<path d="M645.2,65.4 L641.8,68.2 M646.2,68.6 L642.2,71.6 M645,71.2 L642.4,73.4" stroke="#7a7a7a" stroke-width="0.9"/>
<!-- dotted pentagon -->
<g stroke="#45b4dc" stroke-width="1" fill="#fff"><ellipse cx="670" cy="62.8" rx="1.7" ry="1.2"/><ellipse cx="666.7" cy="65.3" rx="1.7" ry="1.2"/><ellipse cx="673.2" cy="65.2" rx="1.7" ry="1.2"/><ellipse cx="663.6" cy="67.5" rx="1.7" ry="1.2"/><ellipse cx="676.5" cy="67.5" rx="1.7" ry="1.2"/><ellipse cx="664.9" cy="71.1" rx="1.7" ry="1.2"/><ellipse cx="675" cy="71.1" rx="1.7" ry="1.2"/><ellipse cx="666.2" cy="74.8" rx="1.7" ry="1.2"/><ellipse cx="670" cy="74.8" rx="1.7" ry="1.2"/><ellipse cx="674.1" cy="74.8" rx="1.7" ry="1.2"/></g>
<!-- trace pentagon -->
<polygon points="695.7,61.6 703,67.4 700.4,75.6 690.9,75.6 688.2,67.4" fill="#fff" stroke="#666" stroke-width="1"/>
<path d="M695.7,63.5 L695.7,66 M690.5,67.5 L693,68 M698.8,68 L701,67.4 M692.5,72.5 L693.8,71 M695.7,71.5 L695.7,74" stroke="#ccc" stroke-width="0.8"/>
<path d="M697,70 L702.8,75.6" stroke="#2a9cd2" stroke-width="1.8"/>
<circle cx="695.7" cy="68.9" r="1.9" fill="#2a9cd2" stroke="none"/>
<!-- offset pentagon -->
<polygon points="721.9,61.2 730.6,67.4 727.6,76.7 716.2,76.7 713.4,67.4" fill="#fff" stroke="#c4c4c4" stroke-width="0.9"/>
<polygon points="721.9,63.9 727.7,68 725.6,74.3 718.3,74.3 716.3,68" fill="#fff" stroke="#333" stroke-width="1.2"/>
<path d="M725.3,65.5 L728.8,62" stroke="#2a9cd2" stroke-width="1.2"/>
<polygon points="731,60 725.8,61.6 729.4,65.2" fill="#2a9cd2" stroke="none"/>
<!-- line colors -->
<path d="M744,63.6 L757.4,63.6" stroke="#f8b878" stroke-width="1"/>
<path d="M744,67 L757.4,67" stroke="#f55c5c" stroke-width="1.8"/>
<path d="M744,70.4 L757.4,70.4" stroke="#3aa8d8" stroke-width="1.4"/>
<path d="M744,73.7 L757.4,73.7" stroke="#10b020" stroke-width="2" stroke-linecap="round"/>
<!-- line style -->
<path d="M770,63.6 L784,63.6" stroke="#555" stroke-width="1" stroke-dasharray="1 1.1"/>
<path d="M770,67 L784,67" stroke="#555" stroke-width="1.8" stroke-dasharray="3.2 1.9"/>
<path d="M770,70.4 L784,70.4" stroke="#333" stroke-width="1.3"/>
<path d="M770,73.7 L784,73.7" stroke="#222" stroke-width="2" stroke-linecap="round"/>
<!-- A -->
<text x="800.4" y="75" font-family="Liberation Serif" font-weight="bold" font-size="17" fill="#333" stroke="none">A</text>
<!-- dropdown -->
<polygon points="827.6,65 836.4,65 832,72.8" fill="#8a8a8a" stroke="none"/>
</svg>
<svg class="a" style="left:0;top:0" width="856" height="663" fill="none" stroke-linejoin="round" stroke-linecap="round">
<!-- select -->
<path d="M18.9,92.7 L31.4,97.8 L29.2,99.8 L35.4,106.4 Q36,107.6 34.9,108.6 Q33.8,109.5 32.9,108.4 L26.5,101.8 L23.9,104.8 Z" stroke="#2e7a93" stroke-width="1.1" fill="#91d5ec"/>
<!-- node edit -->
<path d="M25,120.2 L32,120.2 M25,120.2 L20.4,126 L22.5,132.2" stroke="#555" stroke-width="0.9"/>
<path d="M18.9,92.7 L31.4,97.8 L29.2,99.8 L35.4,106.4 Q36,107.6 34.9,108.6 Q33.8,109.5 32.9,108.4 L26.5,101.8 L23.9,104.8 Z" stroke="#333" stroke-width="1.5" fill="#fff" transform="translate(25 124) scale(0.65) translate(-18.9 -92.7)"/>
<g fill="#3cb0d8" stroke="none">
<rect x="23.6" y="118.8" width="2.8" height="2.8"/><rect x="30.6" y="118.8" width="2.8" height="2.8"/>
<rect x="19" y="124.6" width="2.8" height="2.8"/><rect x="21.1" y="130.8" width="2.8" height="2.8"/>
</g>
<!-- line -->
<path d="M20.8,162.6 L33.2,149.8" stroke="#444" stroke-width="1.1"/>
<!-- rect -->
<rect x="19.4" y="176.4" width="14.6" height="11" stroke="#555" stroke-width="1.2" stroke-linejoin="miter"/>
<!-- rounded rect -->
<rect x="19.4" y="202.2" width="14.6" height="11" rx="2.6" stroke="#555" stroke-width="1.2"/>
<!-- ellipse -->
<ellipse cx="26.8" cy="233.9" rx="8" ry="5.4" stroke="#555" stroke-width="1.1"/>
<!-- polygon bowtie -->
<path d="M25.4,255.2 L34,259.8 L19.6,265.2 L27.9,269.6 Z" stroke="#444" stroke-width="1"/>
<!-- curve (figure 8) -->
<path transform="translate(0.5 0.5)" d="M26.5,288 C24,283 26.5,281.2 29.4,281.2 C32.6,281.2 33.6,284 33,286 C32.3,288.2 29,288.6 26.5,288 C24.2,287.4 19.4,288 19.3,291.5 C19.2,294.4 21.6,295.4 23.6,295 C26.6,294.4 27.6,292 26.5,288 Z" stroke="#444" stroke-width="1"/>
<!-- freehand -->
<path d="M25.8,306.8 L21.6,315" stroke="#3cb4e0" stroke-width="2.6" stroke-linecap="butt"/>
<path d="M21.6,315 L20.9,316.9" stroke="#f0c8c8" stroke-width="1.6" stroke-linecap="butt"/>
<path d="M20.5,319.2 L24.4,322.4 L26.6,319.6 L28.8,321.6 L31,318.9 L32.9,320.1 L34.7,317.6" stroke="#333" stroke-width="1"/>
<!-- smooth freehand -->
<path d="M25.8,332.6 L21.6,340.8" stroke="#fa8c10" stroke-width="2.6" stroke-linecap="butt"/>
<path d="M21.6,340.8 L20.9,342.7" stroke="#e8d0c8" stroke-width="1.6" stroke-linecap="butt"/>
<path d="M20.4,344.6 Q23.5,349.8 27.8,347.6 Q31.5,344.4 34.6,344.3" stroke="#444" stroke-width="1"/>
<!-- arc -->
<path d="M25,362.6 L19.6,376 L34.4,376" stroke="#e4e4e4" stroke-width="0.9"/>
<path d="M25.2,362.6 Q33.8,365 34.5,376" stroke="#444" stroke-width="1"/>
<!-- pentagon -->
<polygon points="26.6,389.2 33.3,394.3 30.8,401.7 22.5,401.7 20.1,394.3" stroke="#444" stroke-width="1.1"/>
<!-- text -->
<text x="20.6" y="430.4" font-family="Liberation Serif" font-weight="bold" font-size="14.5" fill="#333" stroke="none">A</text>
<path d="M32.5,418.6 L32.5,431.4 M31.2,418.6 L33.8,418.6 M31.2,431.4 L33.8,431.4" stroke="#3cb0d8" stroke-width="1" stroke-linecap="butt"/>
<!-- eraser -->
<path d="M19.6,457.4 L22.2,452.2 L30.4,447.4 L35.1,449.6 L35.1,453 L25.8,458.8 L23.4,459.8 Z" stroke="#444" stroke-width="1" fill="#fff"/>
<path d="M22.3,452.2 L24,451.2 L25.8,454.3 L35,449.7 M25.8,454.3 L23.6,459.6" stroke="#444" stroke-width="0.9"/>
<!-- knife -->
<path d="M24.9,479.3 L27.6,480.9 L21.6,488.2 Z" stroke="#444" stroke-width="0.9" fill="#fff"/>
<rect x="26.9" y="470.7" width="3.6" height="9.6" rx="1.7" transform="rotate(32 28.7 475.5)" stroke="#444" stroke-width="1" fill="#fff"/>
<!-- design view -->
<rect x="19.9" y="520.5" width="14.2" height="10.8" stroke="#3f8ea8" stroke-width="2" fill="#9adaee" stroke-linejoin="miter"/>
<rect x="21.3" y="521.9" width="11.4" height="8" stroke="#69b3ca" stroke-width="0.8" stroke-linejoin="miter"/>
<!-- book -->
<path d="M26.8,546 Q23,543.8 19,545 L19,556.8 Q23,555.6 26.8,558 Q30.6,555.6 34.6,556.8 L34.6,545 Q30.6,543.8 26.8,546 Z" stroke="#666" stroke-width="1" fill="#fff"/>
<path d="M26.8,546 L26.8,558 M20.6,548.2 L25,549 M20.6,551 L25,551.8 M20.6,553.8 L25,554.6 M28.6,549 L33,548.2 M28.6,551.8 L33,551 M28.6,554.6 L33,553.8" stroke="#888" stroke-width="0.8"/>
<!-- play -->
<polygon points="23,570.8 31,575.1 23,579.4" fill="#8a8a8a" stroke="none"/>
</svg>
<svg class="a" style="left:0;top:0" width="856" height="663" fill="none" stroke-linejoin="round">
<!-- group -->
<rect x="20.3" y="630.4" width="8.2" height="7.2" stroke="#b4b4b4" stroke-width="0.9"/>
<rect x="25.3" y="634" width="8.1" height="7.2" stroke="#b4b4b4" stroke-width="0.9"/>
<g fill="#a9d9e8" stroke="none">
<rect x="18.3" y="628.5" width="3" height="3"/><rect x="32.5" y="628.5" width="3" height="3"/>
<rect x="18.3" y="640" width="3" height="3"/><rect x="32.5" y="640" width="3" height="3"/>
</g>
<!-- ungroup -->
<rect x="45.6" y="630.2" width="9.7" height="7.4" stroke="#b4b4b4" stroke-width="0.9"/>
<rect x="50.8" y="634" width="9.4" height="7.5" stroke="#b4b4b4" stroke-width="0.9"/>
<g fill="#a9d9e8" stroke="none">
<rect x="44.1" y="628.7" width="3" height="3"/><rect x="53.8" y="628.7" width="3" height="3"/>
<rect x="44.1" y="636.1" width="3" height="3"/><rect x="53.8" y="636.1" width="3" height="3"/>
<rect x="49.3" y="632.5" width="3" height="3"/><rect x="58.7" y="632.5" width="3" height="3"/>
<rect x="49.3" y="640" width="3" height="3"/><rect x="58.7" y="640" width="3" height="3"/>
</g>
<!-- compound -->
<path d="M74.3,636.7 L74.3,629.6 L82.6,629.6" stroke="#2e7a93" stroke-width="1"/>
<path d="M83.5,629.6 L88,629.6 L88,634" stroke="#2e7a93" stroke-width="1" stroke-dasharray="1 1.2"/>
<path d="M74.3,637.6 L74.3,641.6 L78.6,641.6" stroke="#2e7a93" stroke-width="1" stroke-dasharray="1 1.2"/>
<rect x="78.9" y="634.2" width="8.8" height="7.5" stroke="#2e7a93" stroke-width="1.1" fill="#fff"/>
<rect x="87.8" y="641.3" width="3" height="3" stroke="#2e7a93" stroke-width="0.9" fill="#fff"/>
<!-- disabled overlap -->
<rect x="99.6" y="629.6" width="9.4" height="7.2" stroke="#c0e2ec" stroke-width="1" fill="#fff"/>
<rect x="104.5" y="634.2" width="9.3" height="7.5" stroke="#c0e2ec" stroke-width="1" fill="#fff"/>
<!-- overlap filled -->
<rect x="126.1" y="629.6" width="8.7" height="7.2" stroke="#2e7a93" stroke-width="1.1" fill="#fff"/>
<rect x="131.1" y="634.2" width="8.8" height="7.5" stroke="#2e7a93" stroke-width="1.1" fill="#5ab9d6"/>
<rect x="139.6" y="641.3" width="3" height="3" stroke="#2e7a93" stroke-width="0.9" fill="#fff"/>
<!-- cubes -->
<path d="M159.7,627.6 L164.6,630.3 L164.6,636.8 L159.7,639.4 L155.2,637 L155.2,630.3 Z M155.2,630.3 L159.7,632.6 L164.6,630.3" stroke="#b0b0b0" stroke-width="0.9" fill="#fff"/>
<path d="M166.1,631.2 L170.7,634.1 L170.7,640.2 L166.1,642.7 L161.3,640.2 L161.3,634.1 Z" stroke="#a8d4e2" stroke-width="0.9" fill="#fff"/>
<path d="M161.3,634.1 L166.1,636.8 L170.7,634.1" stroke="#a8d4e2" stroke-width="0.9"/>
<!-- X curved -->
<path d="M181.8,628.8 Q192,632 196.2,642.8 M196.2,628.8 Q186,632 181.8,642.8" stroke="#b4b4b4" stroke-width="0.9"/>
<!-- steps -->
<rect x="211.2" y="629.2" width="6.6" height="6.6" stroke="#b4b4b4" stroke-width="0.9" fill="#e4e4e4"/>
<rect x="218.5" y="636.1" width="6.2" height="6.6" stroke="#b4b4b4" stroke-width="0.9" fill="#e4e4e4"/>
<rect x="214.4" y="632.4" width="7" height="7" rx="1.2" stroke="#b4b4b4" stroke-width="0.9" fill="#fff"/>
<path d="M240.5,635.8 L240.5,639.5 L244.2,639.5 M243.6,632.4 L245.6,632.4 Q247.3,632.4 247.3,634.2 L247.3,636.1" stroke="#b4b4b4" stroke-width="0.9"/>
<rect x="237" y="629.2" width="6.6" height="6.6" stroke="#b4b4b4" stroke-width="0.9" fill="#e4e4e4"/>
<rect x="244.3" y="636.1" width="6.6" height="6.6" stroke="#b4b4b4" stroke-width="0.9" fill="#e4e4e4"/>
<!-- union -->
<path d="M265.3,642.4 L265.3,634.3 L271.5,634.3 Q271.6,628.5 276.1,628.5 Q280.9,628.5 280.9,633.3 Q280.9,637.3 277.6,638.1 L277.6,642.4 Z" stroke="#cccccc" stroke-width="0.9" fill="#eeeeee"/>
<!-- concentric -->
<circle cx="299.2" cy="636.1" r="6.8" stroke="#777" stroke-width="1"/>
<circle cx="299.2" cy="636.1" r="4.7" stroke="#38afd8" stroke-width="1.8"/>
<ellipse cx="299.2" cy="636.1" rx="1.9" ry="2.6" stroke="#444" stroke-width="1.2"/>
<!-- eyedropper -->
<polygon points="319,643.7 325.3,633.2 331.6,643.7" fill="#cbe9f1" stroke="none"/>
<path d="M331.6,633.4 L323.6,642.2 M330.2,632 L322.4,641" stroke="#d8d8d8" stroke-width="0.9"/>
<circle cx="333.7" cy="630.8" r="3.3" fill="#ececec" stroke="#cfcfcf" stroke-width="0.8"/>
<path d="M330.8,633.2 L323,641.8" stroke="#e0a8a0" stroke-width="0.5"/>
<!-- layers -->
<path d="M352,632.4 L359.6,628.6 L359.6,637.6 L352,641.5 Z" stroke="#444" stroke-width="1" fill="#fff"/>
<path d="M354.6,634 L362,630.2 L362,639.3 L354.6,643 Z" stroke="#444" stroke-width="1" fill="#fff"/>
<path d="M354.6,634.6 L359.6,632 L359.6,637.6 L354.6,640.2 Z" fill="#38afd8" stroke="none"/>
</svg>
<svg class="a" style="left:0;top:0" width="856" height="663">
<g transform="translate(806 634.8)">
<path d="M-1.3,-9 L1.3,-9 L1.8,-6.6 L3.9,-5.7 L6,-7.1 L7.8,-5.3 L6.4,-3.2 L7.3,-1.1 L9.5,-0.6 L9.5,1.6 L7.3,2.1 L6.4,4.2 L7.8,6.3 L6,8.1 L3.9,6.7 L1.8,7.6 L1.3,9.8 L-1.3,9.8 L-1.8,7.6 L-3.9,6.7 L-6,8.1 L-7.8,6.3 L-6.4,4.2 L-7.3,2.1 L-9.5,1.6 L-9.5,-0.6 L-7.3,-1.1 L-6.4,-3.2 L-7.8,-5.3 L-6,-7.1 L-3.9,-5.7 L-1.8,-6.6 Z" fill="#3a9ad0" transform="translate(0 -0.4)"/>
<circle cx="0" cy="0" r="3.1" fill="#fff"/>
</g>
<path d="M836.68,633.81 A7.0,7.0 0 0 0 828.73,627.37" stroke="#27aee0" stroke-width="2.5" fill="none"/><polygon points="825.36,627.84 828.70,624.34 829.54,630.28" fill="#27aee0"/><path d="M825.39,628.78 A7.0,7.0 0 0 0 823.76,638.01" stroke="#1a6f88" stroke-width="2.5" fill="none"/><polygon points="825.57,640.89 821.01,639.26 826.10,636.08" fill="#1a6f88"/><path d="M827.08,640.79 A7.0,7.0 0 0 0 835.64,638.01" stroke="#8fd3ea" stroke-width="2.5" fill="none"/><polygon points="837.44,635.13 837.97,639.94 832.88,636.76" fill="#8fd3ea"/>
</svg></div></body></html>
